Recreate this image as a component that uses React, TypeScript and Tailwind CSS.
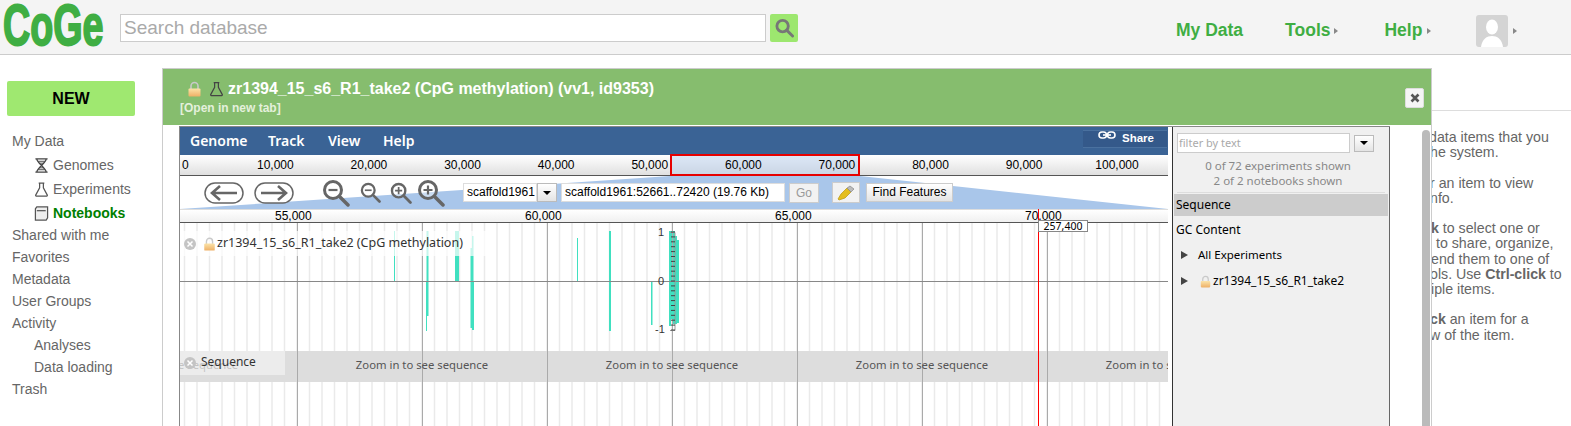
import { useId } from 'react'

const sans = 'font-["Liberation_Sans",Arial,sans-serif]'
const noto = 'font-["Noto_Sans",sans-serif]'

function Lock({ className }: { className: string }) {
  const id = useId()
  return (
    <svg viewBox="0 0 14 16" className={className}>
      <defs>
        <linearGradient id={id} x1="0" y1="0" x2="0" y2="1">
          <stop offset="0" stopColor="#fbe3a8" />
          <stop offset="1" stopColor="#eeb066" />
        </linearGradient>
      </defs>
      <path d="M3.5 8V5a3.5 3.5 0 0 1 7 0v3" fill="none" stroke="#c9c9c9" strokeWidth="1.6" />
      <rect x="1" y="7.5" width="12" height="8" rx="1" fill={`url(#${id})`} />
    </svg>
  )
}

function Flask({ className, color = '#555' }: { className: string; color?: string }) {
  return (
    <svg viewBox="0 0 16 16" className={className} fill="none" stroke={color} strokeWidth="1.3">
      <path d="M5 1.2h6M6 1.2v5L1.8 14a.7.7 0 0 0 .6 1h11.2a.7.7 0 0 0 .6-1L10 6.200v-5" />
    </svg>
  )
}

function Hourglass() {
  return (
    <svg viewBox="0 0 16 16" className="w-[15px] h-[15px]" fill="none" stroke="#444" strokeWidth="1.4">
      <path d="M1.500 1h13M1.500 15h13M3 1c0 4 10 10 10 14M13 1c0 4-10 10-10 14" />
      <path d="M4.500 3.500h7M5.500 5.500h5M5.500 10.500h5M4.500 12.500h7" strokeWidth="1" />
    </svg>
  )
}

function Notebook() {
  return (
    <svg viewBox="0 0 16 16" className="w-[15px] h-[15px]" fill="#eee" stroke="#555" strokeWidth="1.3">
      <path d="M3 1h11.500v11.500L13 15H1.500V3z" />
      <path d="M3 5h9.500" fill="none" />
    </svg>
  )
}

function Magnifier({ size, sign }: { size: string; sign: 'plus' | 'minus' }) {
  return (
    <svg viewBox="0 0 28 28" className={size} fill="none" stroke="#666" strokeWidth="3">
      <circle cx="11" cy="11" r="8.500" fill="#fff" fillOpacity="0.4" />
      <path d="M17.500 17.500 26 26" strokeLinecap="round" strokeWidth="3.500" />
      <path d={sign === 'plus' ? 'M6.500 11h9M11 6.500v9' : 'M6.500 11h9'} strokeWidth="2.200" />
    </svg>
  )
}

function ArrowPill({ dir }: { dir: 'left' | 'right' }) {
  return (
    <svg viewBox="0 0 40 22" className="w-[40px] h-[22px]" fill="none" stroke="#666">
      <rect x="1" y="1" width="38" height="20" rx="10" fill="#fff" strokeWidth="1.500" />
      <path
        d={dir === 'left' ? 'M33 11H8M16 4l-8 7 8 7' : 'M7 11h25M24 4l8 7-8 7'}
        strokeWidth="2.600"
      />
    </svg>
  )
}

function CloseDot() {
  return (
    <svg viewBox="0 0 12 12" className="w-[12px] h-[12px] shrink-0">
      <circle cx="6" cy="6" r="6" fill="#c4c4c4" />
      <path d="M3.500 3.500l5 5M8.500 3.500l-5 5" stroke="#fff" strokeWidth="1.500" />
    </svg>
  )
}

function TriRight() {
  return <span className="inline-block w-0 h-0 border-y-[3.500px] border-y-transparent border-l-[4px] border-l-[#888]" />
}

function CaretBtn({ className }: { className: string }) {
  return (
    <div className={`flex items-center justify-center bg-gradient-to-b from-white to-[#e4e4e4] border border-[#bbb] ${className}`}>
      <span className="w-0 h-0 border-x-[4px] border-x-transparent border-t-[4px] border-t-black" />
    </div>
  )
}

// grid + coverage bars of the methylation track, x/y relative to the track origin (180,223)
const minorTicks = Array.from({ length: 80 }, (_, i) => 4.5 + i * 12.5)
const majorTicks = [117.5, 242.5, 367.5, 492.5, 617.5, 742.5, 867.5]
const bars = [
  [214, 8, 1, 50],
  [246.5, 8, 2, 50],
  [275, 8, 4, 50],
  [290.5, 25, 1.5, 33],
  [292, 13, 1.5, 45],
  [397, 15, 1, 43],
  [429, 8, 2, 50],
  [489, 8, 3, 50],
  [493, 8, 2, 50],
  [495, 13, 2, 45],
  [497, 17, 2, 41],
  // below the axis
  [246, 58, 1, 50],
  [246.5, 58, 2, 35],
  [290.5, 58, 1.5, 47],
  [292, 58, 2, 49],
  [429, 58, 2, 50],
  [471, 58, 1.5, 44],
  [489, 58, 2, 45],
  [491, 58, 2, 38],
  [493, 58, 4, 43],
  [497, 58, 2, 42],
]
const axisTicks = Array.from({ length: 21 }, (_, i) => 9 + i * 4.9)

function TrackCanvas() {
  return (
    <svg className="absolute inset-0 w-full h-full">
      {minorTicks.map((x) => (
        <line key={x} x1={x} x2={x} y1="0" y2="203" stroke="#eaeaea" strokeWidth="1.500" />
      ))}
      <rect x="0" y="128" width="988" height="31" fill="#ddd" />
      {majorTicks.map((x) => (
        <line key={x} x1={x} x2={x} y1="0" y2="203" stroke="#aaa" strokeWidth="1" />
      ))}
      {bars.map(([x, y, w, h], i) => (
        <rect key={i} x={x} y={y} width={w} height={h} fill="#40e0c0" />
      ))}
      <line x1="0" x2="988" y1="58.5" y2="58.5" stroke="#888" strokeWidth="1" />
      <path d="M490 9.500h5v98h-5" fill="none" stroke="#999" strokeWidth="1" />
      {axisTicks.map((y) => (
        <line key={y} x1="491" x2="495" y1={y} y2={y} stroke="#444" strokeWidth="1" />
      ))}
    </svg>
  )
}

const sideLinks = ['Shared with me', 'Favorites', 'Metadata', 'User Groups', 'Activity']

export default function App() {
  return (
    <div className={`${sans} w-[1571px] h-[426px] overflow-hidden bg-white flex flex-col`}>
      <header className="h-[55px] shrink-0 bg-[#f4f4f4] border-b border-[#ccc] flex items-center relative">
        <div className="w-[120px] h-full shrink-0 pl-[3px]">
          <div className="w-fit -mt-[1px] text-[58px] leading-[52px] font-bold text-[#3fae43] origin-left scale-x-[0.65] [-webkit-text-stroke:2px_#3fae43] whitespace-nowrap">
            CoGe
          </div>
        </div>
        <div className="w-[646px] h-[28px] mt-px bg-white border border-[#ccc] px-[3px] text-[19px] leading-[26px] text-[#aaa]">
          Search database
        </div>
        <div className="ml-[4px] mt-px w-[28px] h-[28px] rounded-[2px] bg-[#9de76f] flex items-center justify-center">
          <svg viewBox="0 0 20 20" className="w-[19px] h-[20px]" fill="none" stroke="#777" strokeWidth="3">
            <circle cx="8" cy="8" r="6" />
            <path d="M12.500 12.500 18.500 18.500" strokeLinecap="round" />
          </svg>
        </div>
        <nav className="ml-[378px] mt-[7px] flex items-center text-[17.500px] font-bold text-[#3fae43]">
          <span>My Data</span>
          <span className="ml-[42px]">Tools</span>
          <span className="ml-[4px] flex"><TriRight /></span>
          <span className="ml-[46px]">Help</span>
          <span className="ml-[5px] flex"><TriRight /></span>
          <div className="ml-[45px] w-[32px] h-[32px] rounded-[3px] bg-[#d4d4d4] overflow-hidden">
            <svg viewBox="0 0 32 32" className="w-full h-full" fill="#fff">
              <ellipse cx="16" cy="12" rx="6" ry="7.500" />
              <path d="M5 32c1-8 6-11 11-11s10 3 11 11z" />
            </svg>
          </div>
          <span className="ml-[5px] flex"><TriRight /></span>
        </nav>
      </header>

      <main className="relative flex-1 flex min-h-0">
        <aside className="w-[162px] shrink-0 pt-[26px] text-[14px] text-[#666]">
          <div className="ml-[7px] w-[128px] h-[35px] rounded-[2px] bg-[#9fe870] flex items-center justify-center text-[16px] font-bold text-black">
            NEW
          </div>
          <div className="mt-[14px] pl-[12px]">
            <div className="h-[23px] leading-[23px]">My Data</div>
            <div className="h-[24px] pl-[22px] flex items-center gap-[4px]"><Hourglass /><span>Genomes</span></div>
            <div className="h-[24px] pl-[22px] flex items-center gap-[4px]"><Flask className="w-[15px] h-[15px]" /><span>Experiments</span></div>
            <div className="h-[24px] pl-[22px] flex items-center gap-[4px]"><Notebook /><span className="font-bold text-[#008000]">Notebooks</span></div>
            <div className="-mt-px">
              {sideLinks.map((s) => (
                <div key={s} className="h-[22px] leading-[22px]">{s}</div>
              ))}
              <div className="h-[22px] leading-[22px] pl-[22px]">Analyses</div>
              <div className="h-[22px] leading-[22px] pl-[22px]">Data loading</div>
              <div className="h-[22px] leading-[22px]">Trash</div>
            </div>
          </div>
        </aside>

        <section className="flex-1 min-w-0 overflow-hidden">
          <div className="h-[56px] border-b border-[#ddd]" />
          <div className="pl-[1228px] pt-[19px] text-[14.200px] leading-[15.200px] text-[#666] whitespace-nowrap">
            <div className="ml-[39px]">data items that you</div>
            <div className="ml-[40px]">he system.</div>
            <div className="ml-[40px] mt-[15.200px]">r an item to view</div>
            <div className="ml-[40px]">nfo.</div>
            <div className="ml-[41px] mt-[15.200px]"><b>k</b> to select one or</div>
            <div className="ml-[46px]">to share, organize,</div>
            <div className="ml-[41px]">end them to one of</div>
            <div className="ml-[40px]">ols. Use <b>Ctrl-click</b> to</div>
            <div className="ml-[41px]">iple items.</div>
            <div className="ml-[40px] mt-[15.200px]"><b>ck</b> an item for a</div>
            <div className="ml-[40px]">w of the item.</div>
          </div>
        </section>

        {/* modal window over the page */}
        <div className="absolute left-[162px] top-[13px] w-[1270px] h-[358px] bg-white border-x border-t border-[#ccc] flex flex-col">
          <div className="h-[56px] shrink-0 bg-[#86bd6e] relative pl-[17px]">
            <div className="flex items-center h-[16px] mt-[12px] pl-[7px] text-[16px] font-bold text-white">
              <Lock className="w-[15px] h-[16px]" />
              <Flask className="w-[15px] h-[16px] ml-[7px]" color="#444" />
              <span className="ml-[4px] whitespace-nowrap">zr1394_15_s6_R1_take2 (CpG methylation) (vv1, id9353)</span>
            </div>
            <div className="mt-[5px] text-[12px] leading-[13px] font-bold text-[#e4f0dc]">[Open in new tab]</div>
            <div className="absolute left-[1242px] top-[19px] w-[19px] h-[20px] rounded-[2px] bg-[#f5f5f5] border border-[#ddd] flex items-center justify-center">
              <svg viewBox="0 0 10 10" className="w-[10px] h-[10px]" stroke="#555" strokeWidth="2.600">
                <path d="M1.500 1.500l7 7M8.500 1.500l-7 7" />
              </svg>
            </div>
          </div>

          <div className="mt-px flex-1 min-h-0 flex pl-[16px] relative">
            <div className="w-[1211px] shrink-0 flex border-l border-[#888] border-t border-t-[#888]">
              <div className="w-[992px] shrink-0 pr-[4px] flex flex-col">
                <div className="h-[28px] shrink-0 bg-[#3a6395] flex text-[14px] font-semibold text-white relative">
                  <div className={`${noto} flex leading-[28px] pl-[10px]`}>
                    <span className="w-[78px]">Genome</span>
                    <span className="w-[60px]">Track</span>
                    <span className="w-[55px]">View</span>
                    <span>Help</span>
                  </div>
                  <div className="absolute left-[903px] top-[3px] w-[84px] h-[18px] bg-[#34598a] border-y border-[#4a719f] flex items-center pl-[15px] gap-[6px]">
                    <svg viewBox="0 0 18 8" className="w-[18px] h-[8px] -mt-[8px]" fill="none" stroke="#fff" strokeWidth="1.600">
                      <rect x="1" y="1" width="7.500" height="6" rx="3" />
                      <rect x="9.500" y="1" width="7.500" height="6" rx="3" />
                      <path d="M5 4h8" />
                    </svg>
                    <span className={`${sans} text-[11.500px] font-bold`}>Share</span>
                  </div>
                </div>

                <div className="relative h-[21px] shrink-0 bg-gradient-to-b from-white to-[#e0e0e0] border-b border-[#555] flex items-center text-[12px] text-black whitespace-nowrap">
                  <span className="w-[77px] pl-[2px] shrink-0">0</span>
                  {['10,000', '20,000', '30,000', '40,000', '50,000', '60,000', '70,000', '80,000', '90,000'].map((n) => (
                    <span key={n} className="w-[93.6px] shrink-0 relative z-10">{n}</span>
                  ))}
                  <span className="-ml-[4px] relative z-10">100,000</span>
                  <div className="absolute left-[490px] top-[-1px] w-[190px] h-[22px] border-2 border-[#e60000] bg-[#a9c6ea]/40" />
                </div>

                <div className="relative h-[33px] shrink-0 flex items-center text-[12px] text-black">
                  <svg className="absolute inset-0 w-full h-full" viewBox="0 0 988 33" preserveAspectRatio="none">
                    <polygon points="0,33 490,0 680,0 988,33" fill="#a9c6ea" />
                  </svg>
                  <div className="relative flex items-center pl-[24px]">
                    <ArrowPill dir="left" />
                    <div className="ml-[10px]"><ArrowPill dir="right" /></div>
                    <div className="ml-[28px]"><Magnifier size="w-[28px] h-[28px]" sign="minus" /></div>
                    <div className="ml-[10px]"><Magnifier size="w-[21px] h-[21px]" sign="minus" /></div>
                    <div className="ml-[9px]"><Magnifier size="w-[22px] h-[22px]" sign="plus" /></div>
                    <div className="ml-[5px]"><Magnifier size="w-[28px] h-[28px]" sign="plus" /></div>
                    <div className="ml-[18px] w-[74px] h-[19px] bg-white border border-[#ddd] leading-[17px] pl-[3px] whitespace-nowrap overflow-hidden">scaffold1961</div>
                    <CaretBtn className="w-[20px] h-[19px]" />
                    <div className="ml-[4px] w-[224px] h-[19px] bg-white border border-[#ddd] leading-[17px] pl-[3px] whitespace-nowrap overflow-hidden">scaffold1961:52661..72420 (19.76 Kb)</div>
                    <div className="ml-[4px] w-[30px] h-[20px] bg-[#f2f2f2] border border-[#ccc] text-[#999] text-center leading-[18px]">Go</div>
                    <div className="ml-[13px] w-[28px] h-[21px] bg-[#f2f2f2] border border-[#ccc] flex items-center justify-center">
                      <svg viewBox="0 0 18 16" className="w-[18px] h-[16px]">
                        <path d="M1 14l3-5 6-6 4 4-6 6-6 2z" fill="#e4be1e" stroke="#b8960e" strokeWidth="0.700" />
                        <path d="M10 3l3-2 4 3-3 3z" fill="#bbb" stroke="#888" strokeWidth="0.700" />
                      </svg>
                    </div>
                    <div className="ml-[6px] w-[87px] h-[19px] bg-gradient-to-b from-white to-[#e4e4e4] border border-[#ccc] text-center leading-[17px] whitespace-nowrap">Find Features</div>
                  </div>
                </div>

                <div className="h-[14px] shrink-0 bg-gradient-to-b from-white to-[#f0f0f0] border-b border-[#555] border-t border-t-[#ddd] flex pl-[95px] text-[12px] leading-[13px] text-black whitespace-nowrap">
                  {['55,000', '60,000', '65,000', '70,000'].map((n) => (
                    <span key={n} className="w-[250px] shrink-0">{n}</span>
                  ))}
                </div>

                <div className="relative flex-1 min-h-0 overflow-hidden">
                  <TrackCanvas />
                  <div className={`absolute left-0 right-0 top-[128px] h-[31px] overflow-hidden flex ${noto} text-[11.300px] leading-[28px] text-[#555] whitespace-nowrap`}>
                    {[0, 1, 2, 3, 4].map((i) => (
                      <span key={i} className="w-[250px] shrink-0 text-center first:-ml-[133px]">Zoom in to see sequence</span>
                    ))}
                  </div>
                  <div className="absolute left-[478px] top-[3px] text-[11px] leading-[12px] text-[#333]">1</div>
                  <div className="absolute left-[478px] top-[52px] text-[11px] leading-[12px] text-[#333]">0</div>
                  <div className="absolute left-[475px] top-[100px] text-[11px] leading-[12px] text-[#333]">-1</div>
                  <div className={`absolute left-0 top-[8px] w-[313px] h-[25px] bg-white/70 flex items-center pl-[4px] ${noto} text-[12.500px] text-[#333] whitespace-nowrap`}>
                    <CloseDot />
                    <Lock className="ml-[7px] w-[13px] h-[14px]" />
                    <span className="ml-[1px]">zr1394_15_s6_R1_take2 (CpG methylation)</span>
                  </div>
                  <div className={`absolute left-0 top-[128px] w-[105px] h-[24px] bg-[#f2f2f2]/70 flex items-center pl-[4px] ${noto} text-[12px] text-[#333]`}>
                    <CloseDot />
                    <span className="ml-[5px] -mt-[2px]">Sequence</span>
                  </div>
                </div>
              </div>

              <div className="w-[218px] shrink-0 bg-[#f0f0f0] border-l border-[#333] border-r border-r-[#666] pl-[1px] pr-px">
                <div className="flex items-center pt-[6px] pl-[3px]">
                  <div className={`w-[173px] h-[20px] bg-white border border-[#ccc] pl-[1px] ${noto} text-[11px] leading-[18px] text-[#aaa]`}>filter by text</div>
                  <CaretBtn className="ml-[4px] w-[20px] h-[17px]" />
                </div>
                <div className={`mt-[6px] ${noto} text-[11.500px] leading-[14.500px] text-[#888] text-center pr-[6px]`}>
                  <div>0 of 72 experiments shown</div>
                  <div>2 of 2 notebooks shown</div>
                </div>
                <div className="mt-[4px] mx-[3px] border-t border-[#ddd]" />
                <div className={`${noto} text-[12px] text-black`}>
                  <div className="mt-[1px] h-[22px] bg-[#ccc] pl-[2px] leading-[22px]">Sequence</div>
                  <div className="mt-[3px] h-[22px] pl-[2px] leading-[22px]">GC Content</div>
                  <div className="mt-[3px] h-[22px] flex items-center pl-[7px]">
                    <span className="w-0 h-0 border-y-[4px] border-y-transparent border-l-[7px] border-l-[#444]" />
                    <span className="ml-[10px] text-[11.500px]">All Experiments</span>
                  </div>
                  <div className="mt-[4px] h-[22px] flex items-center pl-[7px]">
                    <span className="w-0 h-0 border-y-[4px] border-y-transparent border-l-[7px] border-l-[#444]" />
                    <Lock className="ml-[12px] w-[11px] h-[13px]" />
                    <span className="ml-[2px]">zr1394_15_s6_R1_take2</span>
                  </div>
                </div>
              </div>
            </div>
            <div className="ml-[32px] mt-[4px] w-[8px] h-full rounded-t-[4px] bg-[#bbb]" />
          </div>
        </div>

        {/* position cursor over the track */}
        <div className="absolute left-[1038px] top-[154px] w-[1px] h-[220px] bg-[#f00]" />
        <div className={`absolute left-[1038px] top-[165px] w-[50px] h-[12px] bg-white border border-[#888] ${noto} text-[10.500px] leading-[10px] text-center text-black`}>
          257,400
        </div>
      </main>
    </div>
  )
}
